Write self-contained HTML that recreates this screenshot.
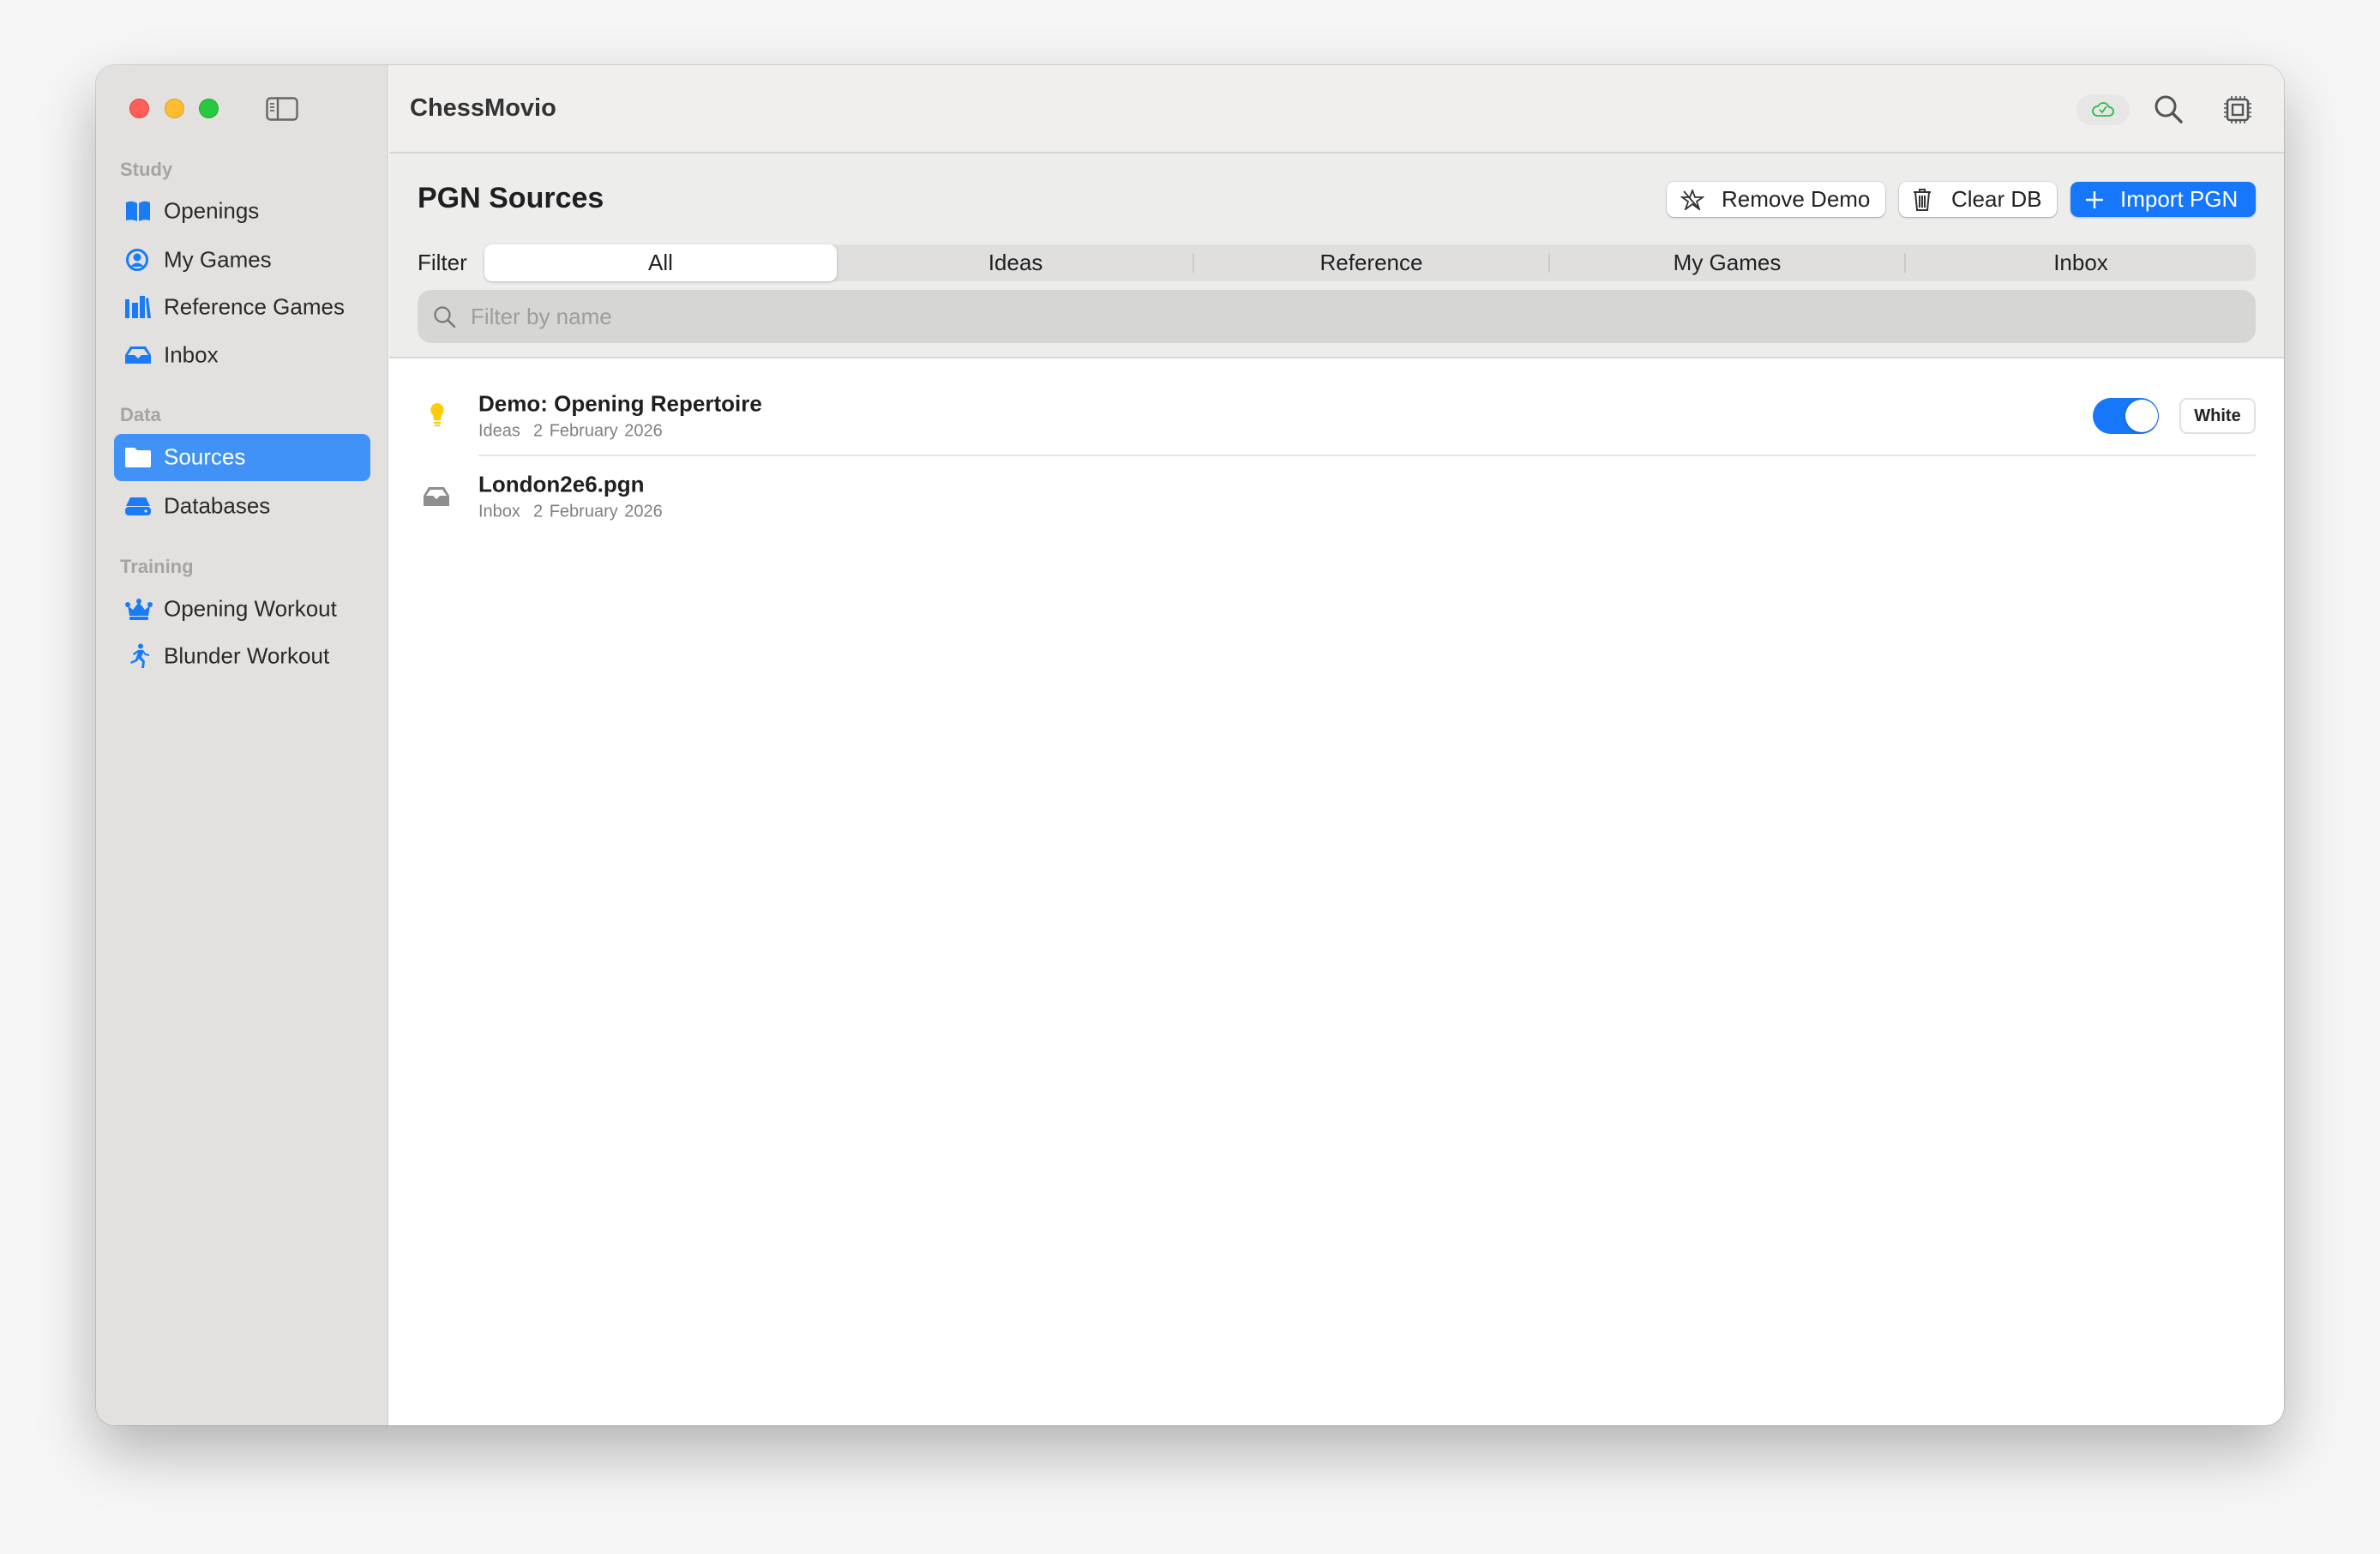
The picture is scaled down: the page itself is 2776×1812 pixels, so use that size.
<!DOCTYPE html>
<html><head><meta charset="utf-8"><style>
*{margin:0;padding:0;box-sizing:border-box}
body{width:2776px;height:1812px;background:#f6f6f6;font-family:"Liberation Sans",sans-serif;position:relative;overflow:hidden;color:#222}
.win{position:absolute;left:112px;top:76px;width:2552px;height:1586px;border-radius:22px;background:#fff;overflow:hidden;box-shadow:0 30px 70px rgba(0,0,0,.28),0 0 0 1px rgba(0,0,0,.12)}
.side{position:absolute;left:0;top:0;width:341px;height:100%;background:#e3e1df;border-right:1px solid #cfcdcb}
.a{position:absolute;white-space:nowrap}
.dot{position:absolute;top:39px;width:23px;height:23px;border-radius:50%}
.sec{position:absolute;left:28px;font-size:22px;font-weight:bold;color:#a6a4a2}
.it{position:absolute;left:79px;font-size:26px;color:#2a2a2a;transform:translateY(-50%);white-space:nowrap}
.ic{position:absolute;left:34px;transform:translateY(-50%)}
.main{position:absolute;left:342px;top:0;right:0;height:100%}
.tb{position:absolute;left:0;right:0;top:0;height:103px;background:#f0efee;border-bottom:2px solid #d6d5d4}
.hd{position:absolute;left:0;right:0;top:103px;height:239px;background:#ededec;border-bottom:2px solid #d8d7d6}
.btn{position:absolute;top:136px;height:41px;border-radius:9px;background:#fff;box-shadow:0 1px 2px rgba(0,0,0,.25),0 0 0 1px rgba(0,0,0,.06);font-size:26px;line-height:41px;color:#222;white-space:nowrap}
.seg{position:absolute;left:111px;top:209px;width:2066px;height:43px;border-radius:10px;background:#e0dfde}
.sg{position:absolute;top:0;height:43px;line-height:43px;text-align:center;font-size:26px;color:#222}
.sep{position:absolute;top:10px;width:2px;height:23px;background:#cbcac9}
.t1{position:absolute;left:104px;font-size:26px;font-weight:bold;color:#1f1f1f;transform:translateY(-50%);white-space:nowrap}
.t2{position:absolute;left:104px;font-size:20px;color:#808080;transform:translateY(-50%);word-spacing:2px;white-space:nowrap}
</style></head><body>
<div class="win">
 <div class="side">
  <div class="dot" style="left:39px;background:#fe5f57;border:1px solid #e0443e"></div>
  <div class="dot" style="left:80px;background:#febc2e;border:1px solid #dea123"></div>
  <div class="dot" style="left:120px;background:#28c840;border:1px solid #1aab29"></div>
  <svg class="a" style="left:198px;top:37px" width="38" height="28" viewBox="0 0 38 28"><rect x="1.5" y="1.5" width="35" height="25" rx="4" fill="none" stroke="#666" stroke-width="2.4"/><line x1="14" y1="2" x2="14" y2="26" stroke="#666" stroke-width="2.4"/><path d="M5 8h5M5 12h5M5 16h5" stroke="#666" stroke-width="1.8"/></svg>
  <div class="sec" style="top:109px">Study</div>
  <svg class="ic" style="top:170px" width="30" height="26" viewBox="0 0 30 26"><path d="M1 3q7-3 13 1v21q-6-3-13-1z M16 4q6-4 13-1v21q-7-2-13 1z" fill="#1a7cf5"/></svg>
  <div class="it" style="top:170px">Openings</div>
  <svg class="ic" style="top:227px" width="28" height="28" viewBox="0 0 28 28"><circle cx="14" cy="14" r="11.5" fill="none" stroke="#1a7cf5" stroke-width="3"/><circle cx="14" cy="11" r="4.5" fill="#1a7cf5"/><path d="M6 22q8-9 16 0" fill="#1a7cf5"/></svg>
  <div class="it" style="top:227px">My Games</div>
  <svg class="ic" style="top:282px" width="30" height="28" viewBox="0 0 30 28"><rect x="0" y="5" width="5" height="22" fill="#1a7cf5"/><rect x="8" y="9" width="7" height="18" fill="#1a7cf5"/><rect x="17" y="1" width="6" height="26" fill="#1a7cf5"/><path d="M24 4l3-1 3 24h-4z" fill="#1a7cf5"/></svg>
  <div class="it" style="top:282px">Reference Games</div>
  <svg class="ic" style="top:338px" width="30" height="24" viewBox="0 0 30 24"><path d="M6 2h18l6 10v10H0V12z" fill="#1a7cf5"/><path d="M3 12l5-7h14l5 7h-8l-4 4-4-4z" fill="#e3e1df"/></svg>
  <div class="it" style="top:338px">Inbox</div>
  <div class="sec" style="top:395px">Data</div>
  <div class="a" style="left:21px;top:430px;width:299px;height:55px;border-radius:9px;background:#4192f7"></div>
  <svg class="ic" style="top:457px" width="30" height="24" viewBox="0 0 30 24"><path d="M0 3q0-2 2-2h9l3 3h14q2 0 2 2v16q0 2-2 2H2q-2 0-2-2z" fill="#fff"/></svg>
  <div class="it" style="top:457px;color:#fff">Sources</div>
  <svg class="ic" style="top:514px" width="30" height="22" viewBox="0 0 30 22"><path d="M6 1h18l5 10H1z" fill="#1a7cf5"/><rect x="0" y="12" width="30" height="10" rx="4" fill="#1a7cf5"/><circle cx="24" cy="17" r="1.6" fill="#e3e1df"/></svg>
  <div class="it" style="top:514px">Databases</div>
  <div class="sec" style="top:572px">Training</div>
  <svg class="ic" style="top:634px" width="32" height="26" viewBox="0 0 32 26"><path d="M3 9l6 5 7-9 7 9 6-5-2 12H5z" fill="#1a7cf5"/><circle cx="3" cy="8" r="3" fill="#1a7cf5"/><circle cx="29" cy="8" r="3" fill="#1a7cf5"/><circle cx="16" cy="4" r="3" fill="#1a7cf5"/><rect x="5" y="22" width="22" height="4" rx="1" fill="#1a7cf5"/></svg>
  <div class="it" style="top:634px">Opening Workout</div>
  <svg class="ic" style="top:689px;left:38px" width="24" height="30" viewBox="0 0 24 30"><circle cx="14" cy="3.5" r="3" fill="#1a7cf5"/><path d="M11 8l-6 4 1 2 5-3-3 8-6 3 1 2 7-3 2-3 4 4-1 7h3l1-8-4-5 2-5 2 3 5 1v-2l-4-1-3-4z" fill="#1a7cf5"/></svg>
  <div class="it" style="top:689px">Blunder Workout</div>
 </div>
 <div class="main">
  <div class="tb">
   <div class="a" style="left:24px;top:34px;font-size:29px;font-weight:bold;color:#333">ChessMovio</div>
   <div class="a" style="left:1968px;top:34px;width:62px;height:36px;border-radius:18px;background:#e6e6e5"></div>
   <svg class="a" style="left:1986px;top:40px" width="26" height="22" viewBox="0 0 26 22"><path d="M6 19h14a5 5 0 0 0 0-10 7 7 0 0 0-13-1 5.5 5.5 0 0 0-1 11z" fill="none" stroke="#2dbb4a" stroke-width="1.8"/><path d="M9 12l3 3 5-7" fill="none" stroke="#2dbb4a" stroke-width="1.8"/></svg>
   <svg class="a" style="left:2058px;top:34px" width="36" height="36" viewBox="0 0 36 36"><circle cx="14" cy="14" r="11" fill="none" stroke="#555" stroke-width="3"/><path d="M22 22l10 10" stroke="#555" stroke-width="3.4" stroke-linecap="round"/></svg>
   <svg class="a" style="left:2139px;top:35px" width="34" height="34" viewBox="0 0 34 34"><rect x="5" y="5" width="24" height="24" rx="3" fill="none" stroke="#555" stroke-width="2.6"/><rect x="11" y="11" width="12" height="12" fill="none" stroke="#555" stroke-width="2.4"/><path d="M10 1v4M15 1v4M20 1v4M25 1v4M10 29v4M15 29v4M20 29v4M25 29v4M1 10h4M1 15h4M1 20h4M1 25h4M29 10h4M29 15h4M29 20h4M29 25h4" stroke="#555" stroke-width="1.6"/></svg>
  </div>
  <div class="hd"></div>
  <div class="a" style="left:33px;top:136px;font-size:34px;font-weight:bold;color:#1f1f1f">PGN Sources</div>
  <div class="btn" style="left:1490px;width:255px"><svg class="a" style="left:16px;top:9px" width="28" height="24" viewBox="0 0 28 24"><path d="M14 1l3 8h9l-7 5 3 9-8-6-8 6 3-9-7-5h9z" fill="none" stroke="#333" stroke-width="1.8"/><path d="M4 2l18 21" stroke="#333" stroke-width="1.8"/></svg><span style="position:absolute;left:64px">Remove Demo</span></div>
  <div class="btn" style="left:1761px;width:184px"><svg class="a" style="left:16px;top:7px" width="22" height="28" viewBox="0 0 22 28"><path d="M1 5h20M8 5V2h6v3M3 5l2 21h12l2-21M8 9v14M11 9v14M14 9v14" fill="none" stroke="#333" stroke-width="2"/></svg><span style="position:absolute;left:61px">Clear DB</span></div>
  <div class="btn" style="left:1961px;width:216px;background:#1677fa;color:#fff;box-shadow:0 1px 2px rgba(0,0,0,.2)"><svg class="a" style="left:17px;top:10px" width="22" height="22" viewBox="0 0 22 22"><path d="M11 1v20M1 11h20" stroke="#fff" stroke-width="2.4"/></svg><span style="position:absolute;left:58px">Import PGN</span></div>
  <div class="a" style="left:33px;top:215px;font-size:26px;color:#222">Filter</div>
  <div class="seg">
   <div class="sg" style="left:0;width:411px;background:#fff;border-radius:9px;box-shadow:0 1px 3px rgba(0,0,0,.22)">All</div>
   <div class="sg" style="left:413px;width:413px">Ideas</div>
   <div class="sep" style="left:826px"></div>
   <div class="sg" style="left:828px;width:413px">Reference</div>
   <div class="sep" style="left:1241px"></div>
   <div class="sg" style="left:1243px;width:413px">My Games</div>
   <div class="sep" style="left:1656px"></div>
   <div class="sg" style="left:1658px;width:408px">Inbox</div>
  </div>
  <div class="a" style="left:33px;top:262px;width:2144px;height:62px;border-radius:16px;background:#d6d6d5"></div>
  <svg class="a" style="left:51px;top:280px" width="28" height="28" viewBox="0 0 28 28"><circle cx="11" cy="11" r="8.5" fill="none" stroke="#777" stroke-width="2.2"/><path d="M17 17l8 8" stroke="#777" stroke-width="2.4" stroke-linecap="round"/></svg>
  <div class="a" style="left:95px;top:278px;font-size:26px;color:#9d9d9c">Filter by name</div>
  <svg class="a" style="left:46px;top:393px" width="20" height="30" viewBox="0 0 20 30"><path d="M10 1a8 8 0 0 0-5 14l1 6h8l1-6A8 8 0 0 0 10 1z" fill="#fccb0a"/><rect x="6" y="23" width="8" height="2" fill="#fccb0a"/><rect x="7" y="26" width="6" height="2" fill="#fccb0a"/></svg>
  <div class="t1" style="top:395px">Demo: Opening Repertoire</div>
  <div class="t2" style="top:427px">Ideas &nbsp;2 February 2026</div>
  <div class="a" style="left:104px;top:454px;width:2073px;height:2px;background:#e4e4e4"></div>
  <div class="a" style="left:1987px;top:388px;width:77px;height:42px;border-radius:21px;background:#1677fa"></div>
  <div class="a" style="left:2025px;top:390px;width:38px;height:38px;border-radius:50%;background:#fff;box-shadow:0 1px 3px rgba(0,0,0,.3)"></div>
  <div class="a" style="left:2088px;top:388px;width:89px;height:42px;border-radius:9px;background:#fff;border:2px solid #e0e0e0;font-size:20px;font-weight:bold;line-height:38px;text-align:center;color:#222">White</div>
  <svg class="a" style="left:39px;top:490px" width="32" height="26" viewBox="0 0 32 26"><path d="M7 2h18l6 10v12H1V12z" fill="#8e8e8e"/><path d="M4 12l5-7h14l5 7h-8l-4 4-4-4z" fill="#fff"/></svg>
  <div class="t1" style="top:489px">London2e6.pgn</div>
  <div class="t2" style="top:521px">Inbox &nbsp;2 February 2026</div>
 </div>
</div>
</body></html>
